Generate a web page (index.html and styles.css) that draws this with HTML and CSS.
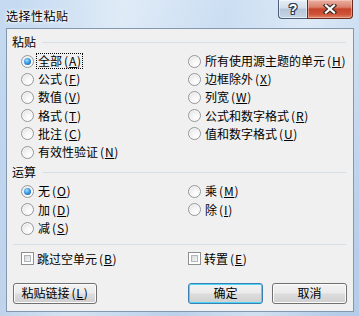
FILE: index.html
```html
<!DOCTYPE html>
<html lang="zh-CN">
<head>
<meta charset="utf-8">
<title>选择性粘贴</title>
<link rel="stylesheet" href="styles.css">
</head>
<body>
<div class="window">
  <div class="titlebar">
    <span class="title">选择性粘贴</span>
    <div class="caption">
      <div class="cap-btn help"><span class="q">?</span></div>
      <div class="cap-btn close">
        <svg width="14" height="10" viewBox="0 0 14 10">
          <path d="M3 1.5 L11 8.5 M11 1.5 L3 8.5" stroke="#3b2b27" stroke-width="4.4" stroke-linecap="square" fill="none"/>
          <path d="M3 1.5 L11 8.5 M11 1.5 L3 8.5" stroke="#ffffff" stroke-width="2.2" stroke-linecap="square" fill="none"/>
        </svg>
      </div>
    </div>
  </div>
  <div class="client">
    <div class="head first"><span>粘贴</span><i class="rule"></i></div>
    <div class="grid paste">
      <label class="opt"><i class="radio on"></i><span class="focus">全部<span class="acc">(<u>A</u>)</span></span></label>
      <label class="opt"><i class="radio"></i><span>公式<span class="acc">(<u>F</u>)</span></span></label>
      <label class="opt"><i class="radio"></i><span>数值<span class="acc">(<u>V</u>)</span></span></label>
      <label class="opt"><i class="radio"></i><span>格式<span class="acc">(<u>T</u>)</span></span></label>
      <label class="opt"><i class="radio"></i><span>批注<span class="acc">(<u>C</u>)</span></span></label>
      <label class="opt"><i class="radio"></i><span>有效性验证<span class="acc">(<u>N</u>)</span></span></label>
      <label class="opt"><i class="radio"></i><span>所有使用源主题的单元<span class="acc">(<u>H</u>)</span></span></label>
      <label class="opt"><i class="radio"></i><span>边框除外<span class="acc">(<u>X</u>)</span></span></label>
      <label class="opt"><i class="radio"></i><span>列宽<span class="acc">(<u>W</u>)</span></span></label>
      <label class="opt"><i class="radio"></i><span>公式和数字格式<span class="acc">(<u>R</u>)</span></span></label>
      <label class="opt"><i class="radio"></i><span>值和数字格式<span class="acc">(<u>U</u>)</span></span></label>
    </div>
    <div class="head second"><span>运算</span><i class="rule"></i></div>
    <div class="grid ops">
      <label class="opt"><i class="radio on"></i><span>无<span class="acc">(<u>O</u>)</span></span></label>
      <label class="opt"><i class="radio"></i><span>加<span class="acc">(<u>D</u>)</span></span></label>
      <label class="opt"><i class="radio"></i><span>减<span class="acc">(<u>S</u>)</span></span></label>
      <label class="opt"><i class="radio"></i><span>乘<span class="acc">(<u>M</u>)</span></span></label>
      <label class="opt"><i class="radio"></i><span>除<span class="acc">(<u>I</u>)</span></span></label>
    </div>
    <div class="sep"></div>
    <div class="grid checks">
      <label class="opt"><i class="check"></i><span>跳过空单元<span class="acc">(<u>B</u>)</span></span></label>
      <label class="opt"><i class="check"></i><span>转置<span class="acc">(<u>E</u>)</span></span></label>
    </div>
    <div class="buttons">
      <div class="btn link">粘贴链接<span class="acc">(<u>L</u>)</span></div>
      <div class="btn ok default">确定</div>
      <div class="btn cancel">取消</div>
    </div>
  </div>
</div>
</body>
</html>
```
FILE: styles.css
```css
* { box-sizing: border-box; }
html, body { margin: 0; padding: 0; }
body {
  width: 359px;
  height: 316px;
  overflow: hidden;
  font-family: "Noto Sans CJK SC", "Noto Sans", sans-serif;
  font-size: 12px;
  color: #000;
}
.window {
  width: 359px;
  height: 316px;
  display: flex;
  flex-direction: column;
  background:
    linear-gradient(100deg, rgba(255,255,255,0) 5%, rgba(255,255,255,.45) 30%, rgba(255,255,255,.1) 55%, rgba(255,255,255,.4) 75%, rgba(255,255,255,0) 95%),
    linear-gradient(#c6dbf1, #b3cce8);
}
.titlebar {
  height: 28px;
  display: flex;
  justify-content: space-between;
  align-items: flex-start;
  padding: 0 6px;
}
.title {
  margin-top: 7px;
  line-height: 17px;
  font-size: 12px;
  letter-spacing: 0.5px;
  color: #000;
  text-shadow: 0 0 5px #fff, 0 0 3px #fff, 0 0 2px #fff;
}
.caption {
  display: flex;
  height: 19px;
}
.cap-btn {
  height: 19px;
  display: flex;
  align-items: center;
  justify-content: center;
  border: 1px solid #4c5f7a;
  border-top: none;
}
.help {
  width: 29px;
  border-right: none;
  border-bottom-left-radius: 4px;
  background: linear-gradient(#e6eef7 0%, #d2deeb 45%, #b6c6d9 50%, #c7d5e4 100%);
  box-shadow: inset 0 0 0 1px rgba(255,255,255,.5);
}
.q {
  font-family: "Liberation Sans", sans-serif;
  font-weight: bold;
  font-size: 14px;
  line-height: 14px;
  color: #fff;
  text-shadow: 1px 0 0 #2e3e55, -1px 0 0 #2e3e55, 0 1px 0 #2e3e55, 0 -1px 0 #2e3e55, 1px 1px 0 #2e3e55, -1px -1px 0 #2e3e55, 1px -1px 0 #2e3e55, -1px 1px 0 #2e3e55;
}
.close {
  width: 46px;
  border-color: #6a2a1d;
  border-bottom-right-radius: 4px;
  background: linear-gradient(#eab0a2 0%, #d9806b 40%, #c5432b 50%, #cf5438 80%, #e0866a 100%);
  box-shadow: inset 0 0 0 1px rgba(255,220,210,.45);
}
.close svg { display: block; }

.client {
  margin: 0 5px 0 6px;
  height: 284px;
  border: 1px solid #8497b0;
  background: #f0f0f0;
  display: flex;
  flex-direction: column;
}
.head {
  display: flex;
  align-items: center;
  height: 14px;
  line-height: 14px;
  padding: 0 7px 0 5px;
  gap: 6px;
}
.head.first { margin-top: 6px; }
.head.second { margin-top: 4px; padding-left: 5px; gap: 7px; }
.rule {
  flex: 1;
  height: 1px;
  background: #d5dfe5;
}
.sep {
  margin: 6px 7px 0 6px;
  height: 1px;
  background: #d5dfe5;
}
.grid {
  display: grid;
  grid-template-columns: 167px 1fr;
  grid-auto-flow: column;
  padding-left: 14px;
}
.paste {
  margin-top: 3px;
  grid-template-rows: repeat(6, 18.2px);
}
.ops {
  margin-top: 3px;
  grid-template-rows: repeat(3, 18.5px);
}
.checks {
  margin-top: 5px;
  grid-template-rows: 18px;
}
.opt {
  display: flex;
  align-items: center;
  gap: 4px;
  white-space: nowrap;
  line-height: 14px;
}
.acc {
  padding-left: 2px;
  letter-spacing: 0.8px;
}
.acc u { text-underline-offset: 1px; }
.focus {
  outline: 1px dotted #000;
  outline-offset: 0;
  margin-left: -1px;
  padding: 0 0 0 1px;
}
.radio {
  flex: none;
  position: relative;
  width: 13px;
  height: 13px;
  border-radius: 50%;
  border: 1px solid #94979a;
  background: radial-gradient(circle at 65% 70%, #ffffff 0%, #f3f3f3 45%, #d6d6d6 100%);
  box-shadow: inset 0 0 0 1px rgba(255,255,255,.7);
}
.radio.on::after {
  content: "";
  position: absolute;
  left: 2px;
  top: 2px;
  width: 7px;
  height: 7px;
  border-radius: 50%;
  background: radial-gradient(circle at 40% 35%, #a6e1ff 0%, #3b9be6 45%, #0b4f9d 100%);
}
.check {
  flex: none;
  width: 13px;
  height: 13px;
  border: 1px solid #8e8f8f;
  background: #fff;
  position: relative;
}
.check::after {
  content: "";
  position: absolute;
  left: 2px; top: 2px; right: 2px; bottom: 2px;
  border: 1px solid #b0b5bb;
  background: linear-gradient(135deg, #d8d9da, #f5f5f5);
}
.grid.checks .opt { gap: 3px; }

.buttons {
  margin-top: 15px;
  display: flex;
  padding: 0 6px 0 6px;
}
.btn {
  height: 21px;
  display: flex;
  align-items: center;
  justify-content: center;
  border: 1px solid #707070;
  border-radius: 3px;
  background: linear-gradient(#f2f2f2 0%, #ebebeb 48%, #dddddd 52%, #cfcfcf 100%);
  box-shadow: inset 0 0 0 1px #fcfcfc;
  line-height: 14px;
}
.link { width: 84px; }
.ok { width: 75px; margin-left: auto; margin-right: 9px; }
.cancel { width: 75px; }
.default {
  border-color: #3c7fb1;
  box-shadow: inset 0 0 0 1px #48d7fb;
}
```
